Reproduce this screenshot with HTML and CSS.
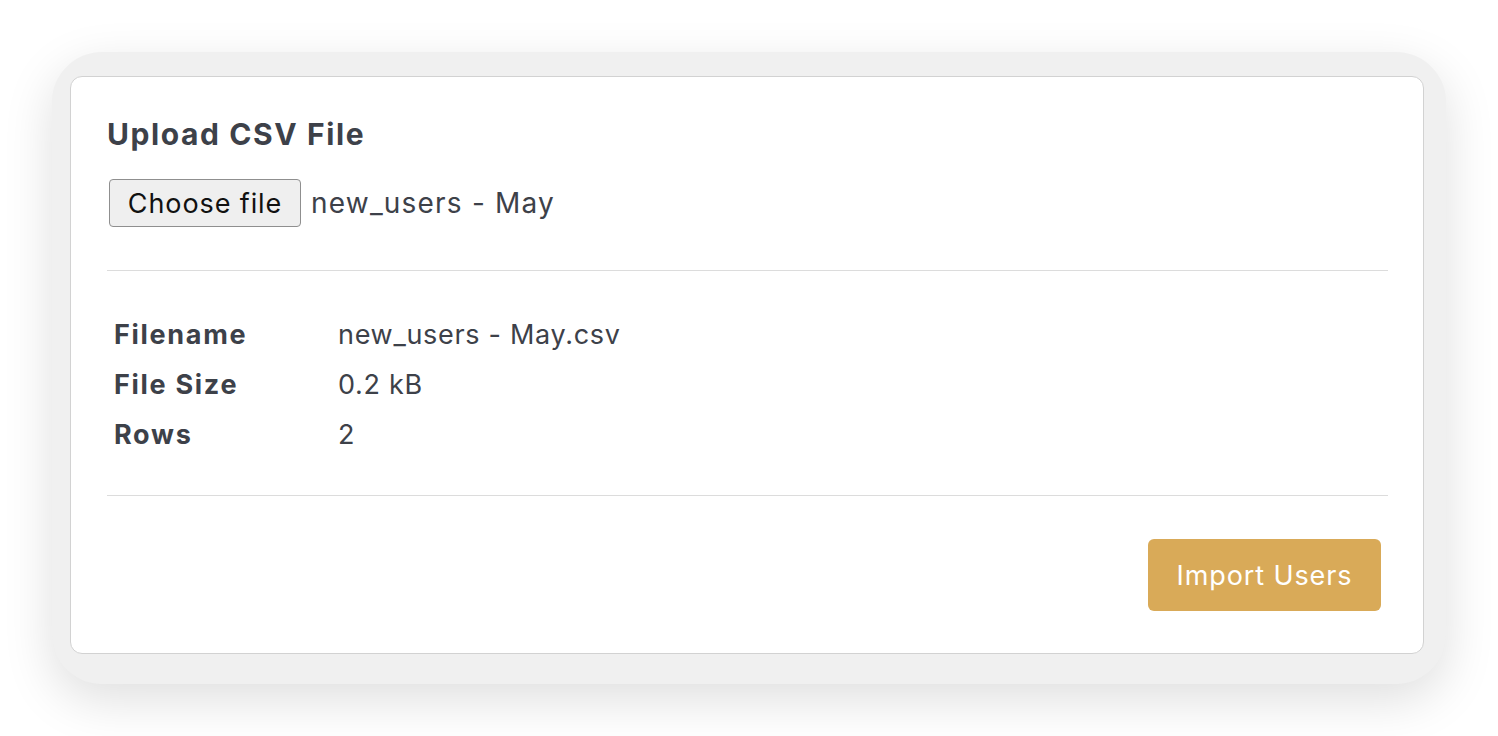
FILE: index.html
```html
<!DOCTYPE html>
<html>
<head>
<meta charset="utf-8">
<link rel="stylesheet" href="styles.css">
</head>
<body>
<div class="frame">
  <div class="card">
    <h2 class="title">Upload CSV File</h2>
    <div class="file-row">
      <button class="choose">Choose file</button>
      <span class="file-name">new_users - May</span>
    </div>
    <hr class="divider">
    <table class="info">
      <tr><th>Filename</th><td>new_users - May.csv</td></tr>
      <tr><th>File Size</th><td>0.2 kB</td></tr>
      <tr><th>Rows</th><td>2</td></tr>
    </table>
    <hr class="divider">
    <div class="actions">
      <button class="import">Import Users</button>
    </div>
  </div>
</div>
</body>
</html>
```

FILE: styles.css
```css
html, body {
  margin: 0;
  padding: 0;
  background: #ffffff;
}
body {
  font-family: Inter, "Noto Sans", "Liberation Sans", sans-serif;
  color: #3d4149;
  padding: 52px 0 52px 52px;
}
.frame {
  box-sizing: border-box;
  width: 1394px;
  height: 632px;
  background: #f0f0f0;
  border-radius: 50px;
  box-shadow: 0 16px 50px rgba(0, 0, 0, 0.13);
  padding: 24px 22px 30px 18px;
}
.card {
  box-sizing: border-box;
  height: 100%;
  background: #ffffff;
  border: 1px solid #d2d2d2;
  border-radius: 12px;
  padding: 0 35px 0 36px;
}
.title {
  margin: 0;
  padding-top: 38px;
  font-size: 30px;
  line-height: 38px;
  font-weight: 700;
  letter-spacing: 1.6px;
  color: #3d4149;
}
.file-row {
  display: flex;
  align-items: center;
  gap: 10px;
  margin-top: 26px;
  padding-left: 2px;
}
.choose {
  box-sizing: border-box;
  height: 48px;
  width: 192px;
  padding: 0;
  font-family: Inter, "Liberation Sans", sans-serif;
  font-size: 27px;
  letter-spacing: 0.9px;
  color: #111111;
  background: #efefef;
  border: 1px solid #8f8f8f;
  border-radius: 4px;
}
.file-name {
  font-size: 28px;
  letter-spacing: 1.2px;
  color: #3d4149;
}
.divider {
  margin: 43px 0 0 0;
  border: 0;
  border-top: 1px solid #dcdcdc;
  height: 0;
}
.info {
  margin-top: 38px;
  margin-bottom: 36px;
  border-collapse: collapse;
  font-size: 27px;
}
.info th {
  text-align: left;
  font-weight: 700;
  letter-spacing: 1.7px;
  width: 224px;
  padding: 0 0 0 7px;
  height: 50px;
}
.info td {
  padding: 0;
  height: 50px;
  font-weight: 400;
  letter-spacing: 0.7px;
}
.info + .divider {
  margin-top: 0;
}
.actions {
  display: flex;
  justify-content: flex-end;
  padding-right: 7px;
  margin-top: 43px;
}
.import {
  box-sizing: border-box;
  width: 233px;
  height: 72px;
  background: #d9aa58;
  color: #ffffff;
  border: 0;
  border-radius: 6px;
  font-family: Inter, "Liberation Sans", sans-serif;
  font-size: 27px;
  letter-spacing: 0.9px;
}
```
